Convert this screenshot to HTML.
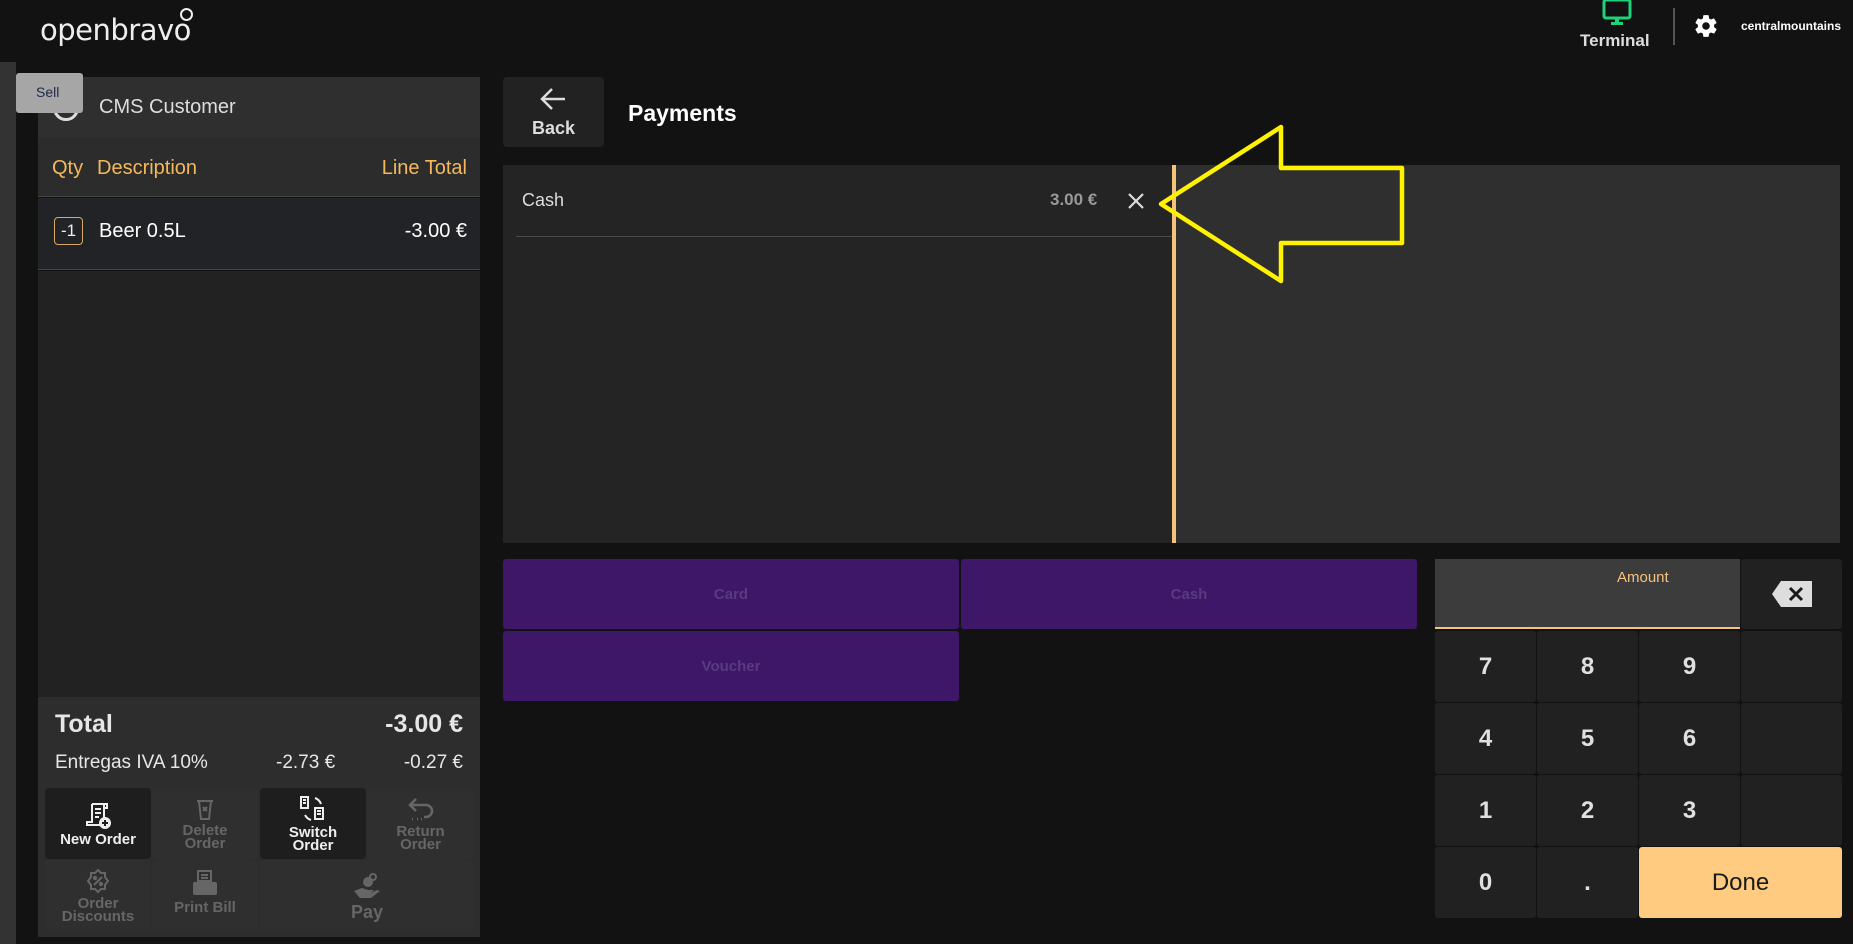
<!DOCTYPE html>
<html><head><meta charset="utf-8"><style>
*{margin:0;padding:0;box-sizing:border-box}
body{width:1853px;height:944px;background:#121212;font-family:"Liberation Sans",sans-serif;position:relative;overflow:hidden;color:#e6e6e6}
.a{position:absolute}
.key{position:absolute;background:#212121;border-radius:3px;color:#e0e0e0;font-weight:bold;font-size:24px;display:flex;align-items:center;justify-content:center}
.pb{position:absolute;background:#3f1768;border-radius:3px;color:#5a3a80;font-weight:bold;font-size:15px;display:flex;align-items:center;justify-content:center}
.ab{position:absolute;border-radius:4px;display:flex;flex-direction:column;align-items:center;justify-content:center;font-weight:bold;font-size:15px;line-height:13px;text-align:center}
</style></head><body>
<!-- logo -->
<div class="a" style="left:40px;top:13px;font-size:29px;color:#eee;letter-spacing:-0.5px;font-family:'DejaVu Sans',sans-serif;font-weight:normal">openbravo</div>
<div class="a" style="left:180px;top:8px;width:13px;height:13px;border:2px solid #eee;border-radius:50%"></div>
<!-- header right -->
<svg class="a" style="left:1602px;top:0" width="30" height="26" viewBox="0 0 30 26"><rect x="2" y="0" width="26" height="18" rx="2" fill="none" stroke="#1fd17a" stroke-width="3"/><rect x="13" y="18" width="4" height="4" fill="#1fd17a"/><rect x="9" y="22" width="12" height="3" fill="#1fd17a"/></svg>
<div class="a" style="left:1580px;top:31px;font-size:17px;font-weight:bold;color:#ddd">Terminal</div>
<div class="a" style="left:1673px;top:8px;width:2px;height:37px;background:#555"></div>
<svg class="a" style="left:1693px;top:13px" width="26" height="26" viewBox="0 0 24 24"><path fill="#fff" d="M19.4 13c.04-.33.06-.66.06-1s-.02-.67-.06-1l2.1-1.65c.2-.15.24-.42.12-.64l-2-3.46c-.12-.22-.39-.3-.61-.22l-2.490 1c-.52-.4-1.080-.73-1.690-.98l-.38-2.650A.49.49 0 0 0 14 2h-4c-.25 0-.46.18-.49.42l-.38 2.65c-.61.25-1.17.59-1.69.98l-2.49-1c-.23-.09-.49 0-.61.22l-2 3.46c-.13.22-.07.49.12.64L4.57 11c-.04.33-.07.66-.07 1s.03.67.07 1l-2.11 1.65c-.19.15-.24.42-.12.64l2 3.46c.12.22.39.3.61.22l2.49-1c.52.4 1.08.73 1.69.98l.38 2.65c.03.24.24.42.49.42h4c.25 0 .46-.18.49-.42l.38-2.65c.61-.25 1.17-.59 1.69-.98l2.49 1c.23.09.49 0 .61-.22l2-3.46c.12-.22.07-.49-.12-.64L19.4 13zM12 15.5a3.5 3.5 0 1 1 0-7 3.5 3.5 0 0 1 0 7z"/></svg>
<div class="a" style="left:1741px;top:19px;font-size:12px;font-weight:bold;color:#fff">centralmountains</div>

<!-- left strip -->
<div class="a" style="left:0;top:62px;width:16px;height:882px;background:#333"></div>

<!-- left panel -->
<div class="a" style="left:38px;top:77px;width:442px;height:60px;background:#2f2f2f"></div>
<div class="a" style="left:53px;top:95px;width:26px;height:26px;border:3px solid #ddd;border-radius:50%"></div>
<div class="a" style="left:99px;top:96px;font-size:20px;color:#ddd">CMS Customer</div>
<div class="a" style="left:16px;top:73px;width:67px;height:40px;background:#a6a6a6;border-radius:3px;color:#1d2a44;font-size:14px;padding:11px 0 0 20px">Sell</div>
<div class="a" style="left:38px;top:137px;width:442px;height:60px;background:#2c2c2c;border-bottom:1px solid #444"></div>
<div class="a" style="left:52px;top:157px;font-size:20px;color:#f5b85a">Qty</div>
<div class="a" style="left:97px;top:157px;font-size:20px;color:#f5b85a">Description</div>
<div class="a" style="right:1386px;top:157px;font-size:20px;color:#f5b85a">Line Total</div>
<div class="a" style="left:38px;top:198px;width:442px;height:72px;background:#222326;border-bottom:1px solid #444"></div>
<div class="a" style="left:54px;top:217px;width:29px;height:28px;border:1px solid #d9a865;border-radius:4px;font-size:17px;color:#eee;text-align:center;line-height:26px">-1</div>
<div class="a" style="left:99px;top:220px;font-size:20px;color:#fff">Beer 0.5L</div>
<div class="a" style="right:1386px;top:220px;font-size:20px;color:#fff">-3.00 €</div>
<div class="a" style="left:38px;top:271px;width:442px;height:426px;background:#222"></div>
<div class="a" style="left:38px;top:697px;width:442px;height:240px;background:#2d2d2d"></div>
<div class="a" style="left:55px;top:710px;font-size:25px;font-weight:bold;color:#e6e6e6">Total</div>
<div class="a" style="right:1390px;top:710px;font-size:25px;font-weight:bold;color:#e6e6e6">-3.00 €</div>
<div class="a" style="left:55px;top:752px;font-size:19px;color:#e6e6e6">Entregas IVA 10%</div>
<div class="a" style="left:276px;top:752px;font-size:19px;color:#e6e6e6">-2.73 €</div>
<div class="a" style="right:1390px;top:752px;font-size:19px;color:#e6e6e6">-0.27 €</div>

<div class="ab" style="left:45px;top:788px;width:106px;height:71px;background:#1e1e1e;color:#eee">
<svg width="28" height="28" viewBox="0 0 28 28" fill="none" stroke="#eee" stroke-width="2"><path d="M8 2h12v16M8 2v18H3v3h14M20 2h3v4h-3M11 7h6M11 11h6M11 15h4"/><circle cx="21" cy="21" r="5" fill="#eee"/><path d="M21 18v6M18 21h6" stroke="#1e1e1e"/></svg><div style="margin-top:3px">New Order</div></div>
<div class="ab" style="left:152px;top:788px;width:106px;height:71px;background:#2f2f2f;color:#666">
<svg width="22" height="24" viewBox="0 0 22 24" fill="none" stroke="#666" stroke-width="2"><path d="M3 4h16M5 4l2 18h8l2-18M9 10l4 4M13 10l-4 4"/></svg><div style="margin-top:3px">Delete<br>Order</div></div>
<div class="ab" style="left:260px;top:788px;width:106px;height:71px;background:#1e1e1e;color:#eee">
<svg width="30" height="28" viewBox="0 0 30 28" fill="none" stroke="#eee" stroke-width="2"><path d="M3 2h7v11H3zM5 5h3M5 8h3M17 3a10 10 0 0 1 6 6M13 25a10 10 0 0 1-6-5M17 13h8v11h-8zM19 16h4M19 19h4"/></svg><div style="margin-top:3px">Switch<br>Order</div></div>
<div class="ab" style="left:367px;top:788px;width:107px;height:71px;background:#2f2f2f;color:#666">
<svg width="30" height="26" viewBox="0 0 30 26" fill="none" stroke="#666" stroke-width="2.5"><path d="M10 3L4 9l6 6M4 9h16a6 6 0 0 1 0 12h-2M6 23h1M11 23h1M15 23h1"/></svg><div style="margin-top:3px">Return<br>Order</div></div>
<div class="ab" style="left:45px;top:860px;width:106px;height:71px;background:#2f2f2f;color:#666">
<svg width="26" height="26" viewBox="0 0 26 26" fill="none" stroke="#666" stroke-width="2"><path d="M13 2l3 3h4v4l3 4-3 4v4h-4l-3 3-3-3H6v-4l-3-4 3-4V5h4z"/><path d="M9 17l8-8"/><circle cx="10" cy="10" r="1.2" fill="#666"/><circle cx="16" cy="16" r="1.2" fill="#666"/></svg><div style="margin-top:3px">Order<br>Discounts</div></div>
<div class="ab" style="left:152px;top:860px;width:106px;height:71px;background:#2f2f2f;color:#666;justify-content:flex-start;padding-top:10px">
<svg width="26" height="26" viewBox="0 0 26 26"><path d="M6 1h13v10H6z" fill="none" stroke="#666" stroke-width="2"/><path d="M9 5h7M9 8h7" stroke="#666" stroke-width="2"/><rect x="1" y="12" width="24" height="13" rx="2" fill="#666"/></svg><div style="margin-top:5px">Print Bill</div></div>
<div class="ab" style="left:260px;top:860px;width:214px;height:71px;background:#2f2f2f;color:#666;font-size:18px">
<svg width="30" height="28" viewBox="0 0 30 28"><circle cx="16" cy="9" r="5" fill="#666"/><circle cx="21" cy="4" r="3" fill="none" stroke="#666" stroke-width="2"/><path d="M2 18l8-3 6 2h6l-3 3h-8 8l6-3 3 1-9 7H8z" fill="#666"/></svg><div style="margin-top:5px">Pay</div></div>

<!-- right top -->
<div class="a" style="left:503px;top:77px;width:101px;height:70px;background:#222;border-radius:4px"></div>
<svg class="a" style="left:539px;top:87px" width="28" height="24" viewBox="0 0 28 24" fill="none" stroke="#ddd" stroke-width="2.5"><path d="M13 2L3 12l10 10M3 12h23"/></svg>
<div class="a" style="left:532px;top:118px;font-size:18px;font-weight:bold;color:#ddd">Back</div>
<div class="a" style="left:628px;top:100px;font-size:23px;font-weight:bold;color:#fff">Payments</div>

<!-- payments panel -->
<div class="a" style="left:503px;top:165px;width:672px;height:378px;background:#242424"></div>
<div class="a" style="left:1175px;top:165px;width:665px;height:378px;background:#2f2f2f"></div>
<div class="a" style="left:1172px;top:165px;width:4px;height:378px;background:#f6c37a"></div>
<div class="a" style="left:522px;top:190px;font-size:18px;color:#ddd">Cash</div>
<div class="a" style="left:1050px;top:190px;font-size:17px;font-weight:bold;color:#999">3.00 €</div>
<svg class="a" style="left:1127px;top:192px" width="18" height="18" viewBox="0 0 18 18" stroke="#ddd" stroke-width="2.2"><path d="M2 2l14 14M16 2L2 16"/></svg>
<div class="a" style="left:516px;top:236px;width:656px;height:1px;background:#4a4a4a"></div>
<svg class="a" style="left:0;top:0" width="1853" height="944"><polygon points="1161,204 1281,127 1281,168 1402,168 1402,243 1281,243 1281,281" fill="none" stroke="#fff200" stroke-width="4.5" stroke-linejoin="round"/></svg>

<!-- payment buttons -->
<div class="pb" style="left:503px;top:559px;width:456px;height:70px">Card</div>
<div class="pb" style="left:961px;top:559px;width:456px;height:70px">Cash</div>
<div class="pb" style="left:503px;top:631px;width:456px;height:70px">Voucher</div>

<!-- keypad -->
<div class="a" style="left:1435px;top:559px;width:305px;height:70px;background:#3c3c3c;border-bottom:2px solid #f6c37a"></div>
<div class="a" style="left:1617px;top:569px;font-size:15px;color:#f6c37a">Amount</div>
<div class="key" style="left:1741px;top:559px;width:101px;height:70px">
<svg width="42" height="28" viewBox="0 0 42 28"><path d="M10 1h31v26H10L1 14z" fill="#ddd"/><path d="M19 8l12 12M31 8L19 20" stroke="#1a1a1a" stroke-width="3"/></svg></div>
<div class="key" style="left:1435px;top:631px;width:101px;height:71px">7</div>
<div class="key" style="left:1537px;top:631px;width:101px;height:71px">8</div>
<div class="key" style="left:1639px;top:631px;width:101px;height:71px">9</div>
<div class="key" style="left:1741px;top:631px;width:101px;height:71px"></div>
<div class="key" style="left:1435px;top:703px;width:101px;height:71px">4</div>
<div class="key" style="left:1537px;top:703px;width:101px;height:71px">5</div>
<div class="key" style="left:1639px;top:703px;width:101px;height:71px">6</div>
<div class="key" style="left:1741px;top:703px;width:101px;height:71px"></div>
<div class="key" style="left:1435px;top:775px;width:101px;height:71px">1</div>
<div class="key" style="left:1537px;top:775px;width:101px;height:71px">2</div>
<div class="key" style="left:1639px;top:775px;width:101px;height:71px">3</div>
<div class="key" style="left:1741px;top:775px;width:101px;height:71px"></div>
<div class="key" style="left:1435px;top:847px;width:101px;height:71px">0</div>
<div class="key" style="left:1537px;top:847px;width:101px;height:71px">.</div>
<div class="key" style="left:1639px;top:847px;width:203px;height:71px;background:#fecb80;color:#1a1a1a;font-weight:normal;font-size:24px">Done</div>
</body></html>
